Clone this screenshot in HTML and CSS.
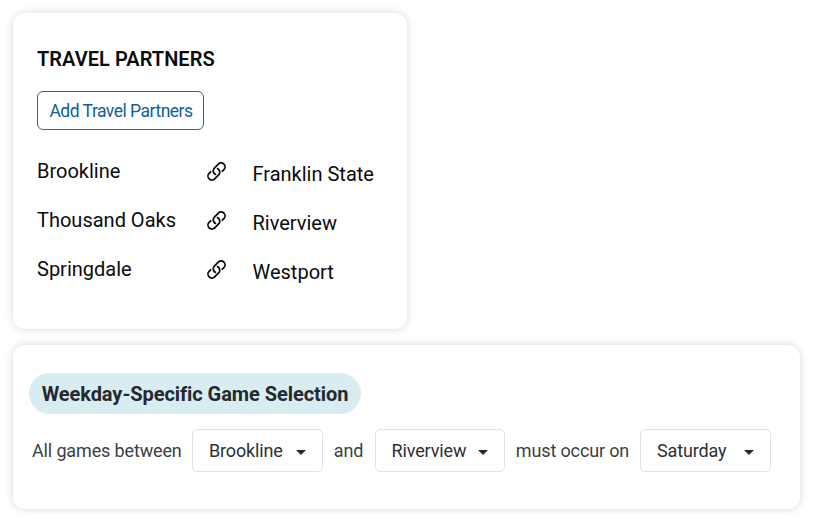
FILE: index.html
```html
<!DOCTYPE html>
<html lang="en">
<head>
  <meta charset="UTF-8">
  <title>Travel Partners</title>
  <link rel="stylesheet" href="styles.css">
</head>
<body>

  <!-- Shared icons -->
  <svg class="icon-defs" width="0" height="0" aria-hidden="true">
    <symbol id="link" viewBox="0 0 24 24">
      <path d="M13.19 8.688a4.5 4.5 0 0 1 1.242 7.244l-4.5 4.5a4.5 4.5 0 0 1-6.364-6.364l1.757-1.757m13.35-.622 1.757-1.757a4.5 4.5 0 0 0-6.364-6.364l-4.5 4.5a4.5 4.5 0 0 0 1.242 7.244"/>
    </symbol>
  </svg>

  <section class="card partners">
    <h2>TRAVEL PARTNERS</h2>
    <button class="add-btn">Add Travel Partners</button>
    <div class="pairs">
      <div class="pair">
        <span>Brookline</span>
        <svg class="link-icon"><use href="#link"/></svg>
        <span class="partner">Franklin State</span>
      </div>
      <div class="pair">
        <span>Thousand Oaks</span>
        <svg class="link-icon"><use href="#link"/></svg>
        <span class="partner">Riverview</span>
      </div>
      <div class="pair">
        <span>Springdale</span>
        <svg class="link-icon"><use href="#link"/></svg>
        <span class="partner">Westport</span>
      </div>
    </div>
  </section>

  <section class="card selection">
    <h3 class="pill">Weekday-Specific Game Selection</h3>
    <div class="rule">
      <span class="between">All games between</span>
      <button class="select">Brookline <i class="caret"></i></button>
      <span class="and">and</span>
      <button class="select">Riverview <i class="caret"></i></button>
      <span class="occur">must occur on</span>
      <button class="select">Saturday <i class="caret"></i></button>
    </div>
  </section>

</body>
</html>
```
FILE: styles.css
```css
* {
  box-sizing: border-box;
}
body {
  margin: 0;
  padding: 13px;
  background: #fff;
  font-family: Roboto, "Liberation Sans", sans-serif;
  color: #0b0c0d;
}
.icon-defs {
  display: block;
}
.card {
  background: #fff;
  border-radius: 12px;
  box-shadow: 0 0 8px rgba(0, 0, 0, 0.16);
}

/* Travel partners */
.partners {
  width: 394px;
  height: 316px;
  padding: 34px 24px;
}
.partners h2 {
  margin: 0;
  font-size: 20px;
  line-height: 24px;
  font-weight: 600;
  letter-spacing: 0.05px;
}
.add-btn {
  display: block;
  width: 167px;
  height: 39px;
  margin-top: 20px;
  padding: 1px 0 0 1px;
  border: 1px solid #1c6ba3;
  border-radius: 6px;
  background: #fff;
  color: #0e5f9b;
  font: 400 17.5px/24px Roboto, sans-serif;
  letter-spacing: -0.5px;
}
.pairs {
  margin-top: 28px;
}
.pair {
  display: grid;
  grid-template-columns: 169px 46.5px 1fr;
  height: 49px;
  font-size: 20px;
  line-height: 26px;
  white-space: nowrap;
}
.link-icon {
  width: 21px;
  height: 21px;
  margin-top: 3px;
  fill: none;
  stroke: #0b0c0d;
  stroke-width: 2;
  stroke-linecap: round;
}
.partner {
  padding-top: 3px;
}

/* Weekday selection */
.selection {
  width: 787px;
  height: 164px;
  margin-top: 16px;
  padding: 28px 16px;
}
.pill {
  width: 332px;
  height: 41px;
  margin: 0;
  border-radius: 21px;
  background: #d9ecf2;
  color: #24292e;
  font-size: 20px;
  line-height: 42px;
  font-weight: 700;
  letter-spacing: -0.06px;
  text-align: center;
  white-space: nowrap;
}
.rule {
  display: flex;
  align-items: center;
  margin-top: 15px;
  padding-left: 3px;
  color: #3b4045;
  font-size: 18px;
  letter-spacing: -0.14px;
  white-space: nowrap;
}
.between {
  width: 160px;
}
.and {
  width: 52px;
  text-align: center;
}
.occur {
  width: 135px;
  text-align: center;
}
.select {
  display: flex;
  align-items: center;
  justify-content: space-between;
  width: 130.5px;
  height: 43px;
  padding: 1px 16px 0;
  border: 1px solid #dfe3e7;
  border-radius: 5px;
  background: #fff;
  color: #2b3035;
  font: 400 18px/24px Roboto, sans-serif;
  letter-spacing: -0.14px;
}
.caret {
  margin-top: 3px;
  border: 5px solid transparent;
  border-top-color: #24292e;
  border-bottom: 0;
}
```
